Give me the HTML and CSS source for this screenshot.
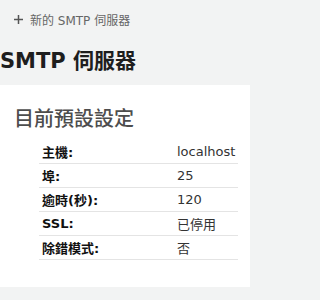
FILE: index.html
```html
<!DOCTYPE html>
<html lang="zh-Hant">
<head>
<meta charset="utf-8">
<link rel="stylesheet" href="styles.css">
</head>
<body>
<div class="toolbar">
  <a class="add-link" href="#"><svg class="plus" width="9" height="9" viewBox="0 0 9 9"><path d="M4.5 0v9M0 4.5h9" stroke="#555" stroke-width="1.5"/></svg><span>新的 SMTP 伺服器</span></a>
</div>
<h1 class="page-title">SMTP 伺服器</h1>
<section class="card">
  <h2 class="card-title">目前預設設定</h2>
  <table class="settings">
    <tr><th>主機:</th><td>localhost</td></tr>
    <tr><th>埠:</th><td>25</td></tr>
    <tr><th>逾時(秒):</th><td>120</td></tr>
    <tr><th>SSL:</th><td>已停用</td></tr>
    <tr><th>除錯模式:</th><td>否</td></tr>
  </table>
</section>
</body>
</html>
```
FILE: styles.css
```css
html, body {
  margin: 0;
  padding: 0;
}
body {
  background: #f2f3f3;
  font-family: "DejaVu Sans", "Noto Sans CJK TC", sans-serif;
  color: #222;
  width: 252px;
  height: 300px;
  overflow: hidden;
}
.toolbar {
  height: 38px;
  padding: 0 14px;
  display: flex;
  align-items: center;
}
.add-link {
  display: flex;
  align-items: center;
  gap: 7px;
  color: #666;
  font-size: 12px;
  text-decoration: none;
}
.plus {
  display: block;
}
.page-title {
  margin: 0;
  height: 47px;
  padding-top: 10px;
  box-sizing: border-box;
  font-size: 21px;
  font-weight: bold;
  color: #1e1e1e;
  line-height: 26px;
}
.card {
  background: #fff;
  width: 250px;
  height: 202px;
  box-sizing: border-box;
  padding: 21px 13px 0 39px;
}
.card-title {
  margin: 0 0 0 -25px;
  font-size: 20px;
  font-weight: 500;
  color: #4d4d4d;
  line-height: 26px;
  height: 34px;
}
.settings {
  width: 199px;
  border-collapse: collapse;
  font-size: 13px;
}
.settings th,
.settings td {
  height: 23px;
  padding: 0 0 0 3px;
  border-bottom: 1px solid #e4e4e4;
  text-align: left;
  vertical-align: middle;
}
.settings th {
  font-weight: bold;
  color: #111;
  width: 132px;
}
.settings td {
  color: #333;
}
```
